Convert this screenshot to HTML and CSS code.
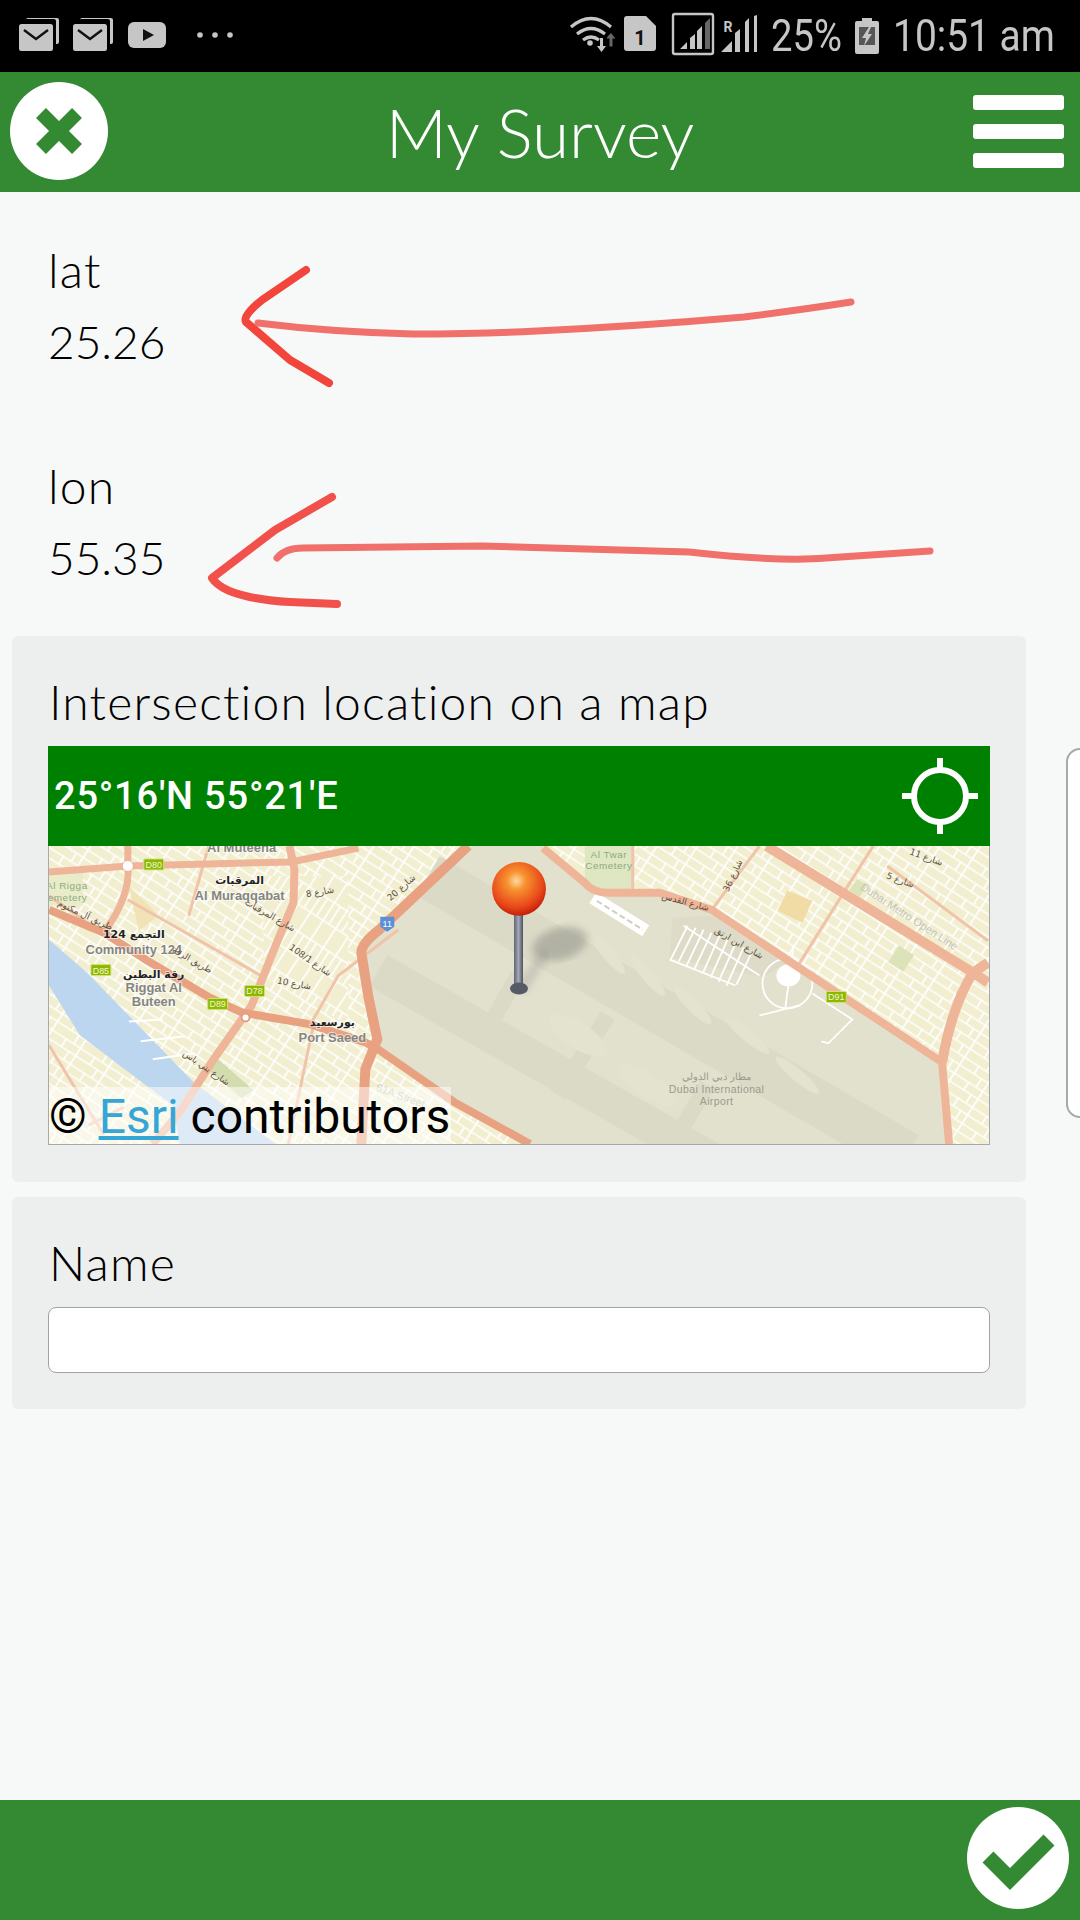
FILE: index.html
```html
<!doctype html>
<html>
<head>
  <meta charset="utf-8">
  <link rel="stylesheet" href="styles.css">
</head>
<body>
<div class="screen">
  <div class="statusbar">
    <svg class="notif-icons" width="250" height="72" viewBox="0 0 250 72">
      <g fill="#c6c6c6">
        <path d="M26 20a2 2 0 0 1 2-2h29a2 2 0 0 1 2 2v22a2 2 0 0 1-2 2h-1v-23a2 2 0 0 0-2-2H26z"/>
        <rect x="19" y="24" width="34" height="27" rx="2.5"/>
        <path d="M80 20a2 2 0 0 1 2-2h29a2 2 0 0 1 2 2v22a2 2 0 0 1-2 2h-1v-23a2 2 0 0 0-2-2H80z"/>
        <rect x="73" y="24" width="34" height="27" rx="2.5"/>
        <rect x="128" y="22" width="38" height="26" rx="6"/>
        <circle cx="200" cy="35" r="2.8"/>
        <circle cx="215" cy="35" r="2.8"/>
        <circle cx="230" cy="35" r="2.8"/>
      </g>
      <path d="M24 30l12 9 12-9M78 30l12 9 12-9" fill="none" stroke="#111" stroke-width="2.4"/>
      <path d="M143 29l11 6-11 6z" fill="#111"/>
    </svg>
    <div class="status-right">
      <svg width="200" height="72" viewBox="560 0 200 72">
        <g fill="none" stroke="#c6c6c6" stroke-width="3.2">
          <path d="M571 27q20-17 40 0"/>
          <path d="M577 34q14-11 28 0"/>
          <path d="M583 40q8-6 16 0"/>
        </g>
        <g fill="#c6c6c6">
          <circle cx="590" cy="43" r="2.8"/>
          <path d="M600 38h3v8h3l-4.500 6-4.500-6h3z"/>
          <path d="M624 19a3 3 0 0 1 3-3h19l10 10v22a3 3 0 0 1-3 3h-26a3 3 0 0 1-3-3z"/>
          <path d="M680 49l7-7v7zM690 49v-11l5-4v15zM697 49v-18l5-5v23z"/>
          <path d="M721 52l11-11v11zM735 52v-19l5-4v23zM745 52v-30l4-4v34zM754 52v-36l3-1v37z"/>
        </g>
        <path d="M608 36l3-3 0 0 4.500 5.500h-3v8h-3v-8h-3z" fill="#666"/>
        <path d="M705 49v-26l5-5v31z" fill="#666"/>
        <rect x="673" y="14" width="40" height="40" rx="2" fill="none" stroke="#c6c6c6" stroke-width="2.400"/>
        <text class="sim-num" x="640" y="45" text-anchor="middle">1</text>
        <text class="roam" x="728" y="32" text-anchor="middle">R</text>
      </svg>
      <span class="status-text pct">25%</span>
      <svg class="battery" width="24" height="36" viewBox="0 0 24 36">
        <path d="M7 0h10v3h5a2 2 0 0 1 2 2v29a2 2 0 0 1-2 2H2a2 2 0 0 1-2-2V5a2 2 0 0 1 2-2h5z" fill="#c6c6c6"/>
        <rect x="4" y="9" width="16" height="18" fill="#555"/>
        <path d="M14 9l-7 11h4l-2 8 8-12h-4l3-7z" fill="#c6c6c6"/>
      </svg>
      <span class="status-text time">10:51 am</span>
    </div>
  </div>

  <header class="appbar">
    <button class="round-btn close-btn">
      <svg width="98" height="98" viewBox="0 0 98 98">
        <circle cx="49" cy="49" r="49" fill="#fff"/>
        <path d="M31 31l36 36M67 31L31 67" stroke="#338a32" stroke-width="14"/>
      </svg>
    </button>
    <h1>My Survey</h1>
    <div class="burger"><i></i><i></i><i></i></div>
  </header>

  <main class="form">
    <div class="field">
      <div class="label">lat</div>
      <div class="value">25.26</div>
    </div>
    <div class="field">
      <div class="label">lon</div>
      <div class="value">55.35</div>
    </div>

    <section class="card map-card">
      <div class="label">Intersection location on a map</div>
      <div class="coord-bar">
        <span>25°16'N 55°21'E</span>
        <svg width="78" height="78" viewBox="0 0 78 78">
          <circle cx="39" cy="39" r="26" fill="none" stroke="#fff" stroke-width="6"/>
          <path d="M39 1v12M39 65v12M1 39h12M65 39h12" stroke="#fff" stroke-width="6"/>
        </svg>
      </div>
      <div class="map">
        <svg width="940" height="298" viewBox="0 0 942 299" preserveAspectRatio="none">
          <defs>
            <pattern id="blocks" width="34" height="19" patternUnits="userSpaceOnUse" patternTransform="rotate(33)">
              <rect width="34" height="19" fill="#f2eed0"/>
              <path d="M0 1h34M0 10h34M1 0v19M18 0v10M27 10v9" stroke="#fff" stroke-width="1.700" fill="none"/>
            </pattern>
            <pattern id="blocksB" width="15" height="44" patternUnits="userSpaceOnUse" patternTransform="rotate(33)">
              <rect width="15" height="44" fill="#f2eed0"/>
              <path d="M0 1h15M0 24h15M1 0v44M8 24v20" stroke="#fff" stroke-width="1.700" fill="none"/>
            </pattern>
            <radialGradient id="ball" cx="0.45" cy="0.35" r="0.7">
              <stop offset="0" stop-color="#ffd9a0"/>
              <stop offset="0.25" stop-color="#f7922e"/>
              <stop offset="0.7" stop-color="#e8481a"/>
              <stop offset="1" stop-color="#b81308"/>
            </radialGradient>
            <linearGradient id="stick" x1="0" x2="1" y1="0" y2="0">
              <stop offset="0" stop-color="#5e6472"/>
              <stop offset="0.5" stop-color="#a3a8b4"/>
              <stop offset="1" stop-color="#4c515e"/>
            </linearGradient>
            <filter id="soft"><feGaussianBlur stdDeviation="4"/></filter>
          </defs>

          <rect width="942" height="299" fill="url(#blocks)"/>
          <path d="M215 30L300 30 300 180 215 130zM640 110L760 190 640 60z" fill="url(#blocksB)"/>
          <path d="M80 40l30 30-20 15z" fill="#f1e3b6"/>
          <path d="M740 45l25 10-10 22-25-12z" fill="#f1dca6"/>
          <rect x="845" y="103" width="18" height="20" fill="#dde3b8" transform="rotate(33 854 113)"/>
          <rect x="805" y="35" width="12" height="14" fill="#dde3b8" transform="rotate(33 811 42)"/>
          <rect x="537" y="0" width="48" height="44" fill="#dfe6c2"/>
          <rect x="0" y="22" width="34" height="38" fill="#e8ecc9"/>
          <path d="M165 210l40 35-12 8-38-32z" fill="#d3dcae"/>

          <!-- water -->
          <path d="M0 94L38 127 145 237 227 299H131L124 260 97 240 31 190 0 140z" fill="#bcd6ef"/>
          <path d="M80 176l34-2M92 196l44-5M104 214l42-6" stroke="#fff" stroke-width="2" fill="none"/>

          <!-- airport -->
          <path d="M420 0H495L537 37 561 47H612L664 64 750 121 895 217 902 299H482L406 257 327 202 329 194 320 151 313 107 331 84z" fill="#e2e1cd"/>
          <g fill="none" stroke="#dbdac6">
            <path d="M380 30L860 310" stroke-width="46"/>
            <path d="M330 125L690 330" stroke-width="36"/>
            <path d="M470 130l-40 70M560 170l-50 80M660 240l-30 50" stroke-width="16"/>
          </g>
          <g fill="#e4e3cf">
            <ellipse cx="560" cy="108" rx="26" ry="6" transform="rotate(50 560 108)"/>
            <ellipse cx="600" cy="130" rx="26" ry="6" transform="rotate(50 600 130)"/>
            <ellipse cx="645" cy="160" rx="26" ry="6" transform="rotate(45 645 160)"/>
            <ellipse cx="700" cy="190" rx="28" ry="6" transform="rotate(40 700 190)"/>
            <ellipse cx="750" cy="230" rx="28" ry="6" transform="rotate(40 750 230)"/>
            <ellipse cx="530" cy="190" rx="34" ry="13" transform="rotate(33 530 190)"/>
            <ellipse cx="600" cy="240" rx="34" ry="12" transform="rotate(33 600 240)"/>
          </g>
          <!-- terminal streets -->
          <path d="M625 72L664 70 737 118 716 132 622 112z" fill="#dedcc8"/>
          <path d="M545 52L598 85" stroke="#fff" stroke-width="13" fill="none"/>
          <path d="M549 55L595 84" stroke="#cfcfc4" stroke-width="2" stroke-dasharray="6 3" fill="none"/>
          <g fill="none" stroke="#fff" stroke-width="1.800">
            <path d="M640 80l-17 34M648 82l-17 34M656 84l-17 36M664 87l-17 36M672 90l-17 38M680 94l-17 38M688 98l-17 38M696 102l-17 38M704 107l-15 32"/>
            <path d="M636 80l76 50M622 114l66 26"/>
            <circle cx="740" cy="138" r="25"/>
            <path d="M746 100l-8 62M712 170l40-10M765 148l40 26-24 24-7-2"/>
          </g>
          <ellipse cx="741" cy="130" rx="12" ry="11" fill="#fff"/>

          <!-- minor roads -->
          <g fill="none" stroke="#f0c4a9" stroke-width="3">
            <path d="M79 54L214 131M0 50L60 92M160 0L140 70"/>
            <path d="M712 0L664 64M826 0L798 44 750 121"/>
            <path d="M585 0V46M941 95L840 20"/>
            <path d="M262 179L290 130 350 84M240 299L265 180"/>
            <path d="M0 200L55 290M40 280L75 262"/>
          </g>
          <!-- main roads -->
          <g fill="none" stroke="#efb598" stroke-width="7">
            <path d="M0 26L79 20 243 16 310 2"/>
            <path d="M79 0V20Q82 50 55 87"/>
            <path d="M241 0L246 24 245 57 227 100 203 160 165 214 131 267 104 299" stroke-width="8"/>
            <path d="M495 2L537 37Q545 47 561 47H612L664 64 750 121 895 217 902 299" stroke-width="8"/>
            <path d="M719 0L802 51 926 127 941 137" stroke-width="10"/>
            <path d="M941 117L926 127Q905 160 895 217" stroke-width="10"/>
          </g>
          <g fill="none" stroke="#e8a281" stroke-width="8">
            <path d="M0 64L55 87 97 114 159 151 193 167 262 179 317 197 327 202 406 257 482 299"/>
            <path d="M420 0L331 84Q313 98 313 107L320 151 329 194 317 224 313 299" stroke-width="10"/>
          </g>
          <circle cx="79" cy="20" r="5" fill="#fff"/>
          <circle cx="197" cy="172" r="4" fill="#fff" stroke="#e69d7b" stroke-width="2"/>

          <!-- labels -->
          <g class="map-name">
            <text x="193" y="6" text-anchor="middle">Al Muteena</text>
            <text x="191" y="54" text-anchor="middle">Al Muraqqabat</text>
            <text x="85" y="108" text-anchor="middle">Community 124</text>
            <text x="105" y="146" text-anchor="middle">Riggat Al</text>
            <text x="105" y="161" text-anchor="middle">Buteen</text>
            <text x="284" y="197" text-anchor="middle">Port Saeed</text>
          </g>
          <g class="map-ar">
            <text x="191" y="38" text-anchor="middle">المرقبات</text>
            <text x="85" y="92" text-anchor="middle">التجمع 124</text>
            <text x="105" y="132" text-anchor="middle">رقة البطين</text>
            <text x="284" y="181" text-anchor="middle">بورسعيد</text>
          </g>
          <g class="map-park">
            <text x="-3" y="43">Al Rigga</text>
            <text x="-9" y="55">Cemetery</text>
            <text x="561" y="12" text-anchor="middle">Al Twar</text>
            <text x="561" y="23" text-anchor="middle">Cemetery</text>
          </g>
          <g class="map-airport">
            <text x="669" y="235" text-anchor="middle">مطار دبي الدولي</text>
            <text x="669" y="248" text-anchor="middle">Dubai International</text>
            <text x="669" y="260" text-anchor="middle">Airport</text>
          </g>
          <text class="map-faint" transform="translate(860 74) rotate(33)" text-anchor="middle">Dubai Metro Open Line</text>
          <text class="map-faint" transform="translate(351 254) rotate(20)" text-anchor="middle">61A Street</text>
          <g class="map-road">
            <text transform="translate(272 49) rotate(-10)" text-anchor="middle">شارع 8</text>
            <text transform="translate(355 44) rotate(-42)" text-anchor="middle">شارع 20</text>
            <text transform="translate(260 117) rotate(35)" text-anchor="middle">شارع 108/1</text>
            <text transform="translate(245 141) rotate(10)" text-anchor="middle">شارع 10</text>
            <text transform="translate(688 31) rotate(-65)" text-anchor="middle">شارع 36</text>
            <text transform="translate(878 14) rotate(20)" text-anchor="middle">شارع 11</text>
            <text transform="translate(852 37) rotate(20)" text-anchor="middle">شارع 5</text>
            <text transform="translate(637 59) rotate(15)" text-anchor="middle">شارع القدس</text>
            <text transform="translate(690 100) rotate(30)" text-anchor="middle">شارع ابن ارتق</text>
            <text transform="translate(220 72) rotate(30)" text-anchor="middle">شارع المرقبات</text>
            <text transform="translate(142 117) rotate(30)" text-anchor="middle">طريق الرقة</text>
            <text transform="translate(35 72) rotate(25)" text-anchor="middle">طريق آل مكتوم</text>
            <text transform="translate(156 225) rotate(35)" text-anchor="middle">شارع بني ياس</text>
          </g>
          <!-- road shields -->
          <g class="shield">
            <rect x="95" y="13" width="20" height="11" rx="1"/><text x="105" y="22" text-anchor="middle">D80</text>
            <rect x="42" y="119" width="20" height="11" rx="1"/><text x="52" y="128" text-anchor="middle">D85</text>
            <rect x="196" y="140" width="20" height="11" rx="1"/><text x="206" y="149" text-anchor="middle">D78</text>
            <rect x="159" y="153" width="20" height="11" rx="1"/><text x="169" y="162" text-anchor="middle">D89</text>
            <rect x="779" y="146" width="20" height="11" rx="1"/><text x="789" y="155" text-anchor="middle">D91</text>
          </g>
          <path d="M332 71h14v10l-7 5-7-5z" fill="#5b8fd6"/>
          <text class="shield-num" x="339" y="81" text-anchor="middle">11</text>

          <!-- pin -->
          <path d="M472 146L498 105" stroke="#999" stroke-width="10" opacity="0.4" filter="url(#soft)"/>
          <ellipse cx="512" cy="98" rx="28" ry="16" fill="#8b8b84" opacity="0.5" filter="url(#soft)" transform="rotate(-15 512 98)"/>
          <rect x="466" y="66" width="9" height="76" fill="url(#stick)"/>
          <ellipse cx="471" cy="143" rx="9" ry="6" fill="#555a66"/>
          <circle cx="471" cy="43" r="27" fill="url(#ball)"/>
        </svg>
        <div class="attribution">© <a href="#">Esri</a> contributors</div>
      </div>
    </section>

    <section class="card name-card">
      <div class="label">Name</div>
      <input class="text-input" type="text">
    </section>

    <div class="side-box"></div>
  </main>

  <footer class="bottombar">
    <button class="round-btn">
      <svg width="102" height="102" viewBox="0 0 102 102">
        <circle cx="51" cy="51" r="51" fill="#fff"/>
        <path d="M21 50l22 22 39-39" fill="none" stroke="#338a32" stroke-width="15.500"/>
      </svg>
    </button>
  </footer>

  <svg class="scribbles" width="1080" height="640" viewBox="0 0 1080 640">
    <g fill="none" stroke-linecap="round" stroke-linejoin="round">
      <path d="M306 270L262 300Q242 316 246 322L290 360 329 383" stroke="#f2463c" stroke-width="8"/>
      <path d="M258 323Q330 332 413 334 480 334 537 331 640 326 744 317 800 310 851 302" stroke="#f0716b" stroke-width="7"/>
      <path d="M332 497L275 530 212 578Q225 598 290 602L337 604" stroke="#f2504a" stroke-width="8"/>
      <path d="M277 558Q285 548 303 548L482 546 689 552Q780 562 826 558L930 551" stroke="#f0716b" stroke-width="7"/>
    </g>
  </svg>
</div>
</body>
</html>
```
FILE: styles.css
```css
* {
  margin: 0;
  padding: 0;
  box-sizing: border-box;
}

body {
  background: #f7f9f9;
  font-family: Lato, sans-serif;
  font-weight: 300;
  color: #000;
}

.screen {
  position: relative;
  width: 1080px;
  height: 1920px;
  display: flex;
  flex-direction: column;
  overflow: hidden;
}

/* status bar */
.statusbar {
  height: 72px;
  background: #000;
  display: flex;
  justify-content: space-between;
  align-items: center;
  padding-right: 26px;
}

.status-right {
  display: flex;
  align-items: center;
}

.status-text {
  display: block;
  font-family: Roboto, sans-serif;
  font-weight: 400;
  font-size: 45px;
  line-height: 72px;
  color: #c6c6c6;
  white-space: nowrap;
  transform-origin: left center;
}

.pct {
  width: 71px;
  margin-left: 11px;
  transform: scaleX(0.85);
}

.battery {
  margin-left: 13px;
}

.time {
  width: 161px;
  margin-left: 14px;
  transform: scaleX(0.865);
}

.sim-num {
  font: 700 20px Roboto, sans-serif;
  fill: #111;
}

.roam {
  font: 700 14px Roboto, sans-serif;
  fill: #c6c6c6;
}

/* top bar */
.appbar {
  height: 120px;
  background: #338a32;
  display: flex;
  align-items: center;
  justify-content: space-between;
  padding: 0 16px 2px 10px;
  position: relative;
}

.appbar h1 {
  position: absolute;
  left: 0;
  right: 0;
  text-align: center;
  font-size: 67.5px;
  font-weight: 300;
  color: #fff;
}

.round-btn {
  display: block;
  border: none;
  background: none;
  line-height: 0;
}

.burger {
  width: 91px;
  display: flex;
  flex-direction: column;
  gap: 14px;
}

.burger i {
  display: block;
  height: 15px;
  background: #fff;
  border-radius: 3px;
}

/* form */
.form {
  flex: 1;
  padding-top: 42px;
  position: relative;
}

.field {
  padding-left: 48px;
  font-size: 46px;
  line-height: 72px;
}

.field + .field {
  margin-top: 72px;
}

.field .label {
  font-size: 48px;
  letter-spacing: 1.2px;
}

.card {
  width: 1014px;
  margin-left: 12px;
  background: #edefef;
  border-radius: 6px;
  padding: 33px 36px 37px;
}

.card .label {
  font-size: 48px;
  letter-spacing: 1.2px;
  line-height: 66px;
  padding-left: 1px;
}

.map-card {
  margin-top: 42px;
  margin-bottom: 15px;
}

.coord-bar {
  margin-top: 11px;
  height: 100px;
  background: #008000;
  color: #fff;
  display: flex;
  align-items: center;
  justify-content: space-between;
  padding: 0 11px 0 6px;
  font-family: Roboto, sans-serif;
  font-weight: 500;
  font-size: 38px;
  letter-spacing: 0.8px;
}

.map {
  position: relative;
  height: 299px;
  border: 1px solid #a9a9a9;
  border-top: none;
  overflow: hidden;
  line-height: 0;
}

.attribution {
  position: absolute;
  left: 0;
  bottom: 0;
  width: 402px;
  height: 57px;
  background: rgba(255, 255, 255, 0.5);
  font-family: Roboto, sans-serif;
  font-weight: 400;
  font-size: 48px;
  line-height: 60px;
  white-space: nowrap;
}

.attribution a {
  color: #35a6d5;
}

.map-name text {
  font: 700 13px "Liberation Sans", sans-serif;
  fill: #85857f;
  stroke: rgba(255, 255, 255, 0.6);
  stroke-width: 2px;
  paint-order: stroke;
}

.map-ar text {
  font: 700 11px "DejaVu Sans", sans-serif;
  fill: #222;
  stroke: rgba(255, 255, 255, 0.6);
  stroke-width: 2px;
  paint-order: stroke;
}

.map-park text {
  font: 400 10px "Liberation Sans", sans-serif;
  fill: #8eaa80;
  letter-spacing: 0.5px;
}

.map-airport text {
  font: 400 10.5px "Liberation Sans", sans-serif;
  fill: #9a9a8e;
  letter-spacing: 0.4px;
}

.map-faint {
  font: 400 11px "Liberation Sans", sans-serif;
  fill: #c3c4b8;
}

.map-road text {
  font: 400 9px "DejaVu Sans", sans-serif;
  fill: #5b5040;
}

.shield rect {
  fill: #8cb800;
  stroke: #d3e07a;
}

.shield text {
  font: 400 9px "Liberation Sans", sans-serif;
  fill: #f4f7d8;
}

.shield-num {
  font: 400 9px "Liberation Sans", sans-serif;
  fill: #fff;
}

.name-card {
  padding-top: 33px;
  height: 212px;
}

.text-input {
  display: block;
  width: 100%;
  height: 66px;
  margin-top: 11px;
  background: #fff;
  border: 1px solid #a3a3a3;
  border-radius: 8px;
}

/* edge of the next page peeking in */
.side-box {
  position: absolute;
  left: 1066px;
  top: 556px;
  width: 60px;
  height: 370px;
  background: #fff;
  border: 2px solid #a9a9a9;
  border-radius: 14px;
}

/* bottom bar */
.bottombar {
  height: 120px;
  background: #338a32;
  display: flex;
  align-items: center;
  justify-content: flex-end;
  padding: 0 11px 4px 0;
}

/* hand drawn red arrows */
.scribbles {
  position: absolute;
  left: 0;
  top: 0;
}
```
